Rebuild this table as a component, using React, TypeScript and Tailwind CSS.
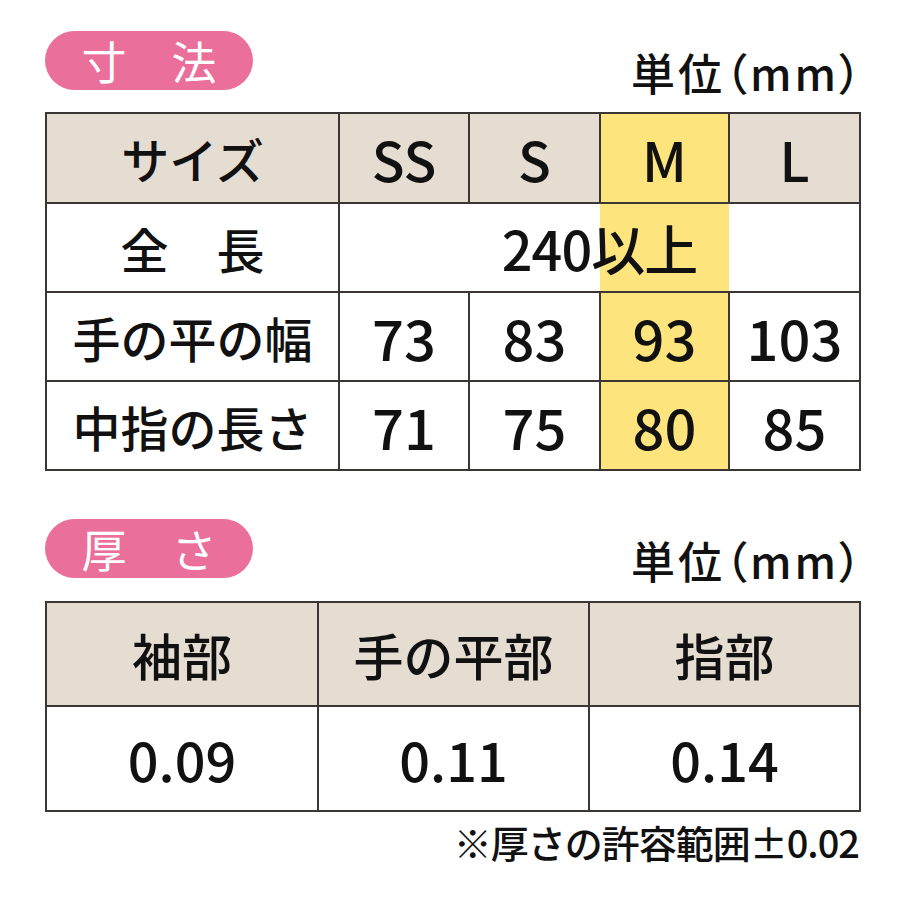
import React from "react";

const font = { fontFamily: '"Noto Sans CJK JP", "Noto Sans", sans-serif' };

function Pill({ children }: { children: React.ReactNode }) {
  return (
    <div className="flex h-[59px] w-[208px] items-center justify-center rounded-full bg-[#ea6f9a] text-[45px] font-normal leading-none text-white">
      {children}
    </div>
  );
}

function Unit() {
  return (
    <div className="mr-[-2px] text-[44px] font-medium leading-none tracking-[3px] text-[#111] [font-feature-settings:'palt']">
      単位（mm）
    </div>
  );
}

const cell = "border-2 border-[#3b3634] text-center align-middle p-0";

export default function App() {
  return (
    <div className="h-[900px] w-[900px] bg-white pl-[45px] pr-[41px] font-medium text-[#111]" style={font}>
      {/* Section 1 */}
      <div className="flex items-start justify-between pt-[31px]">
        <Pill>寸　法</Pill>
        <div className="mt-[19px] mr-[-3px]">
          <Unit />
        </div>
      </div>
      <table className="mt-[18px] w-[814px] table-fixed border-collapse">
        <colgroup>
          <col className="w-[293px]" />
          <col className="w-[130px]" />
          <col className="w-[131px]" />
          <col className="w-[129px]" />
          <col className="w-[131px]" />
        </colgroup>
        <tbody>
          <tr className="h-[90px] bg-[#e5dcd2]">
            <td className={`${cell} text-[48px]`}>サイズ</td>
            <td className={`${cell} text-[54px]`}>SS</td>
            <td className={`${cell} text-[54px]`}>S</td>
            <td className={`${cell} bg-[#fde47c] text-[54px]`}>M</td>
            <td className={`${cell} text-[54px]`}>L</td>
          </tr>
          <tr className="h-[89px]">
            <td className={`${cell} text-[48px]`}>全　長</td>
            <td
              colSpan={4}
              className={`${cell} bg-[linear-gradient(to_right,transparent_260px,#fde47c_260px,#fde47c_389px,transparent_389px)] text-[54px] tracking-[-1px]`}
            >
              240以上
            </td>
          </tr>
          <tr className="h-[89px]">
            <td className={`${cell} text-[48px]`}>手の平の幅</td>
            <td className={`${cell} text-[56px]`}>73</td>
            <td className={`${cell} text-[56px]`}>83</td>
            <td className={`${cell} bg-[#fde47c] text-[56px]`}>93</td>
            <td className={`${cell} text-[56px]`}>103</td>
          </tr>
          <tr className="h-[89px]">
            <td className={`${cell} text-[48px]`}>中指の長さ</td>
            <td className={`${cell} text-[56px]`}>71</td>
            <td className={`${cell} text-[56px]`}>75</td>
            <td className={`${cell} bg-[#fde47c] text-[56px]`}>80</td>
            <td className={`${cell} text-[56px]`}>85</td>
          </tr>
        </tbody>
      </table>

      {/* Section 2 */}
      <div className="flex items-start justify-between pt-[48px]">
        <Pill>厚　さ</Pill>
        <div className="mt-[19px] mr-[-3px]">
          <Unit />
        </div>
      </div>
      <table className="mt-[19px] w-[814px] table-fixed border-collapse">
        <colgroup>
          <col className="w-[272px]" />
          <col className="w-[271px]" />
          <col className="w-[271px]" />
        </colgroup>
        <tbody>
          <tr className="h-[104px] bg-[#e5dcd2]">
            <td className={`${cell} text-[50px]`}>袖部</td>
            <td className={`${cell} text-[50px]`}>手の平部</td>
            <td className={`${cell} text-[50px]`}>指部</td>
          </tr>
          <tr className="h-[105px]">
            <td className={`${cell} text-[54px]`}>0.09</td>
            <td className={`${cell} text-[54px]`}>0.11</td>
            <td className={`${cell} text-[54px]`}>0.14</td>
          </tr>
        </tbody>
      </table>
      <div className="mt-[11px] text-right text-[38px] leading-none tracking-[-1px]">※厚さの許容範囲±0.02</div>
    </div>
  );
}
